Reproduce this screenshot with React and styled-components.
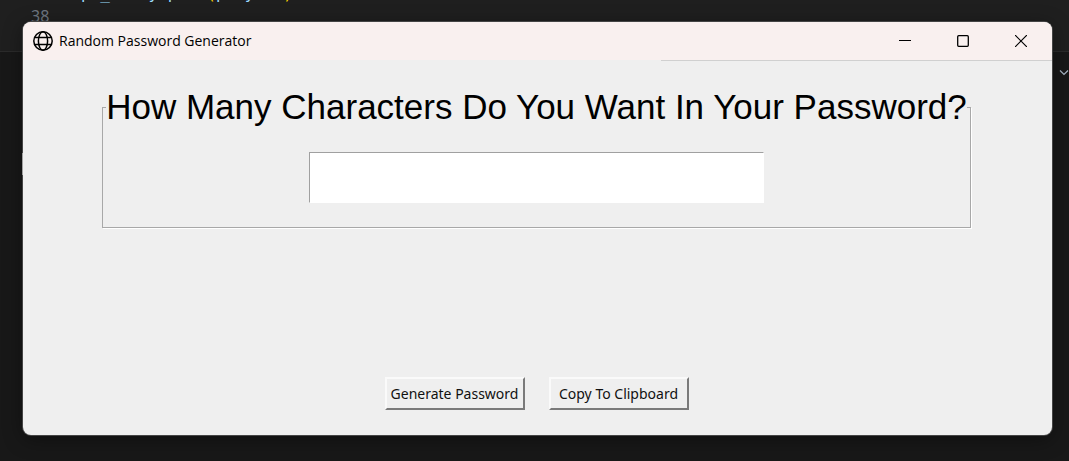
import React from "react";
import styled, { createGlobalStyle } from "styled-components";

const GlobalStyle = createGlobalStyle`
  * { box-sizing: border-box; }
  html, body, #root { height: 100%; }
  body { margin: 0; background: #181818; overflow: hidden; }
`;

const Desktop = styled.div`
  position: relative;
  min-height: 100%;
  display: flex;
  padding: 22px 17px 26px 23px;
  background: #181818;
`;

const Editor = styled.div`
  position: absolute;
  inset: 0 0 auto 0;
  height: 52px;
  overflow: hidden;
  background: #1f1f1f;
  border-bottom: 1px solid #2b2b2b;
  font: 16px/23px "DejaVu Sans Mono", monospace;
`;

const CodeLine = styled.div`
  display: flex;
  gap: 30px;
  padding-left: 31px;
  margin-top: ${(p) => (p.$first ? "-18px" : "0")};
  white-space: pre;
  color: #9cdcfe;
`;

const LineNumber = styled.span`
  width: 20px;
  color: #6e7681;
  font: 16px/23px "Noto Sans", sans-serif;
`;

const Bracket = styled.span`
  color: #ffd700;
`;

const PanelChevron = styled.svg`
  position: absolute;
  top: 68px;
  right: 0;
  width: 10px;
  height: 10px;
`;

const Caret = styled.span`
  position: absolute;
  top: 153px;
  left: 22px;
  width: 1px;
  height: 22px;
  background: #a0a0a0;
`;

const Window = styled.main`
  flex: 1;
  display: flex;
  flex-direction: column;
  z-index: 0;
  overflow: hidden;
  border-radius: 8px;
  background: #efefef;
  box-shadow: 0 0 0 1px #454545, 0 4px 20px rgba(0, 0, 0, 0.4);
`;

const TitleBar = styled.header`
  display: flex;
  align-items: center;
  height: 38px;
  padding-left: 10px;
  background: #f9f0ef;
`;

const Title = styled.h1`
  flex: 1;
  margin: 0 0 0 6px;
  font: 400 14px/20px "Open Sans", sans-serif;
  color: #000;
`;

const WindowControls = styled.div`
  display: flex;
  gap: 12px;
  padding-right: 8px;
`;

const ControlButton = styled.button`
  display: grid;
  place-items: center;
  width: 46px;
  height: 38px;
  padding: 0;
  border: 0;
  background: none;
`;

const Content = styled.div`
  flex: 1;
  display: flex;
  flex-direction: column;
  align-items: center;
  justify-content: space-between;
  padding: 27px 22px 25px 20px;
  background: linear-gradient(#d0d0d0, #d0d0d0) top right / 38% 1px no-repeat;
`;

const LengthGroup = styled.fieldset`
  display: flex;
  justify-content: center;
  margin: 0;
  padding: 25px 3px 24px;
  border: 1px solid #a8a8a8;
  box-shadow: 1px 1px 0 #fff;
`;

const Legend = styled.legend`
  padding: 0;
  font: 400 35px/40px "Liberation Sans", Arial, sans-serif;
  color: #000;
  white-space: nowrap;
`;

const LengthInput = styled.input`
  width: 455px;
  height: 51px;
  padding: 0 4px;
  border: 1px solid;
  border-color: #a0a0a0 #fff #fff #a0a0a0;
  border-radius: 0;
  outline: 0;
  background: #fff;
  font: 32px "Liberation Sans", Arial, sans-serif;
`;

const Actions = styled.div`
  display: flex;
  gap: 24px;
`;

const ActionButton = styled.button`
  width: 140px;
  height: 33px;
  padding: 0;
  border: 2px solid;
  border-color: #fafafa #7a7a7a #7a7a7a #fafafa;
  border-radius: 0;
  background: #efefef;
  font: 14px/20px "Noto Sans", sans-serif;
  color: #111;
  white-space: nowrap;
`;

const GlobeIcon = () => (
  <svg width="20" height="20" viewBox="0 0 20 20" fill="none" stroke="#000" strokeWidth="1.5" aria-hidden="true">
    <circle cx="10" cy="10" r="9.2" />
    <ellipse cx="10" cy="10" rx="4.6" ry="9.2" />
    <path d="M2 6.5h16M2 13.5h16" />
  </svg>
);

export default function App() {
  return (
    <>
      <GlobalStyle />
      <Desktop>
        <Editor aria-hidden="true">
          <CodeLine $first>
            <LineNumber />
            <span>pw_entry.pack<Bracket>(</Bracket>pady=20<Bracket>)</Bracket></span>
          </CodeLine>
          <CodeLine>
            <LineNumber>38</LineNumber>
          </CodeLine>
        </Editor>
        <PanelChevron viewBox="0 0 10 10" fill="none" stroke="#a9b7c6" strokeWidth="1.2" aria-hidden="true">
          <path d="M1 2.5 5 6.5 9 2.5" />
        </PanelChevron>
        <Window>
          <TitleBar>
            <GlobeIcon />
            <Title>Random Password Generator</Title>
            <WindowControls>
              <ControlButton type="button" aria-label="Minimize">
                <svg width="12" height="12" stroke="#000"><path d="M0 5.5h12" /></svg>
              </ControlButton>
              <ControlButton type="button" aria-label="Maximize">
                <svg width="12" height="12" fill="none" stroke="#000" strokeWidth="1.3"><rect x=".7" y=".7" width="10.6" height="10.6" rx="1" /></svg>
              </ControlButton>
              <ControlButton type="button" aria-label="Close">
                <svg width="12" height="12" stroke="#000" strokeWidth="1.2"><path d="M0 0 12 12M12 0 0 12" /></svg>
              </ControlButton>
            </WindowControls>
          </TitleBar>
          <Content>
            <LengthGroup>
              <Legend id="length-label">How Many Characters Do You Want In Your Password?</Legend>
              <LengthInput type="text" aria-labelledby="length-label" />
            </LengthGroup>
            <Actions>
              <ActionButton type="button">Generate Password</ActionButton>
              <ActionButton type="button">Copy To Clipboard</ActionButton>
            </Actions>
          </Content>
        </Window>
        <Caret />
      </Desktop>
    </>
  );
}
